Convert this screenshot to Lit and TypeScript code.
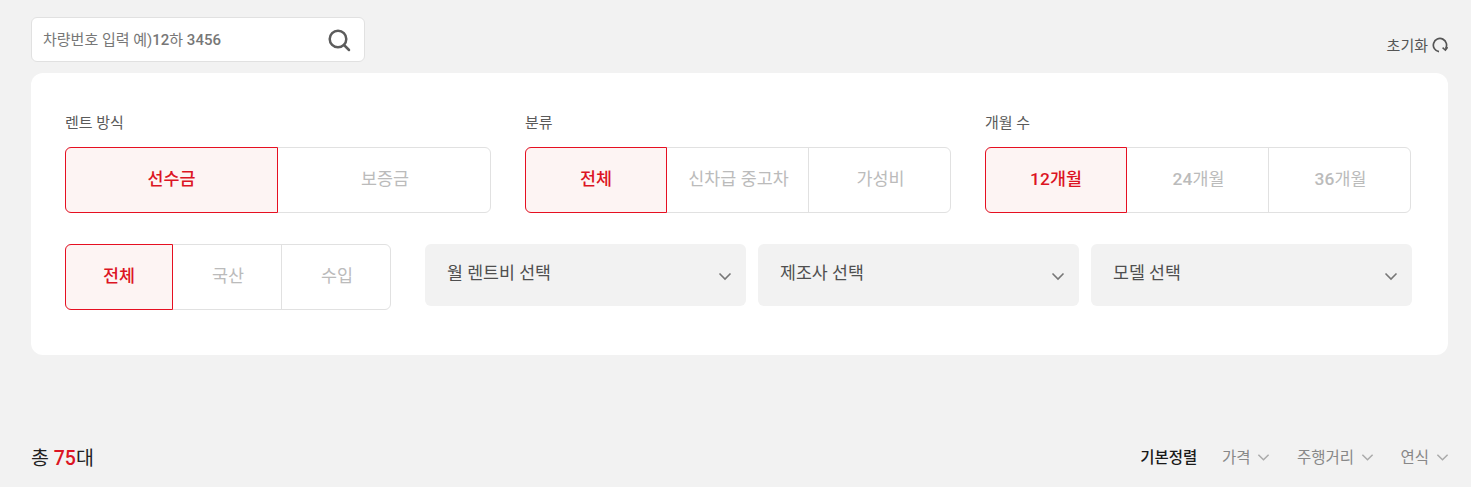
import { LitElement, html, css, svg } from "lit";
import { customElement } from "lit/decorators.js";

const chevron = html`<svg class="chev" viewBox="0 0 14 9" fill="none"><path d="M1.5 1.5 7 7l5.5-5.5" stroke="currentColor" stroke-width="1.6"/></svg>`;

type Seg = { label: string; options: string[] };

const segs: Seg[] = [
  { label: "렌트 방식", options: ["선수금", "보증금"] },
  { label: "분류", options: ["전체", "신차급 중고차", "가성비"] },
  { label: "개월 수", options: ["12개월", "24개월", "36개월"] },
];

// digits sit a weight above the hangul around them
const nums = (text: string) =>
  text
    .split(/(\d+)/)
    .map((part) => (/^\d+$/.test(part) ? html`<span class="num">${part}</span>` : part));

@customElement("app-root")
export class AppRoot extends LitElement {
  static styles = css`
    :host {
      display: block;
      height: 487px;
      overflow: hidden;
      background: #f2f2f2;
      font-family: Roboto, "Noto Sans CJK KR", sans-serif;
      color: #333;
    }
    .num {
      font-weight: 500;
    }
    .page {
      padding: 17px 23px 0 31px;
    }
    .top {
      display: flex;
      justify-content: space-between;
      align-items: flex-end;
      height: 45px;
      margin-bottom: 11px;
    }
    .search {
      box-sizing: border-box;
      width: 334px;
      height: 45px;
      display: flex;
      align-items: center;
      justify-content: space-between;
      padding: 0 13px 0 11px;
      background: #fff;
      border: 1px solid #e1e1e1;
      border-radius: 6px;
      font-size: 15px;
      color: #777;
    }
    .search .text {
      padding-bottom: 3px;
    }
    .search svg {
      width: 24px;
      height: 24px;
    }
    .reset {
      display: flex;
      align-items: center;
      gap: 4px;
      font-size: 15px;
      color: #555;
      height: 18px;
      margin: 0 0 9px;
    }
    .reset svg {
      width: 16px;
      height: 16px;
      margin-top: 2px;
    }
    .panel {
      box-sizing: border-box;
      height: 282px;
      padding: 39px 36px 0 34px;
      background: #fff;
      border-radius: 12px;
    }
    .row1 {
      display: grid;
      grid-template-columns: repeat(3, 426px);
      gap: 34px;
      margin-bottom: 31px;
    }
    .label {
      font-size: 15px;
      line-height: 22px;
      color: #5a5a5a;
      margin-bottom: 13px;
    }
    .group {
      display: flex;
      height: 66px;
      box-sizing: border-box;
      border: 1px solid #e1e1e1;
      border-radius: 6px;
    }
    .opt {
      flex: 1 1 0;
      display: flex;
      align-items: center;
      justify-content: center;
      box-sizing: border-box;
      padding: 0 0 6px 2px;
      font-size: 17.4px;
      color: #bbb;
      border-left: 1px solid #e1e1e1;
    }
    .opt:first-child {
      border-left: 0;
    }
    .opt.on {
      margin: -1px 0 -1px -1px;
      padding-left: 0;
      flex: 0 0 auto;
      border: 1px solid #e60f21;
      border-radius: 6px 0 0 6px;
      background: #fdf4f3;
      color: #dc1423;
      font-weight: 500;
    }
    .opt.on + .opt {
      border-left: 0;
    }
    .row2 {
      display: flex;
      align-items: flex-start;
    }
    .kind {
      width: 326px;
      margin-right: 34px;
    }
    .selects {
      display: grid;
      grid-template-columns: repeat(3, 321px);
      gap: 12px;
    }
    .select {
      height: 62px;
      display: flex;
      align-items: center;
      justify-content: space-between;
      box-sizing: border-box;
      padding: 0 14px 8px 22px;
      background: #f2f2f2;
      border-radius: 6px;
      font-size: 17.3px;
      color: #4f4f4f;
    }
    .select .chev {
      color: #777;
      margin-top: 10px;
    }
    .chev {
      width: 14px;
      height: 9px;
    }
    .bottom {
      display: flex;
      justify-content: space-between;
      align-items: center;
      margin: 86px -1px 0 0;
      height: 30px;
    }
    .total {
      font-size: 19.5px;
      color: #222;
    }
    .total b {
      font-weight: 500;
      color: #dc1423;
    }
    .sort {
      display: flex;
      align-items: center;
      gap: 26.5px;
      font-size: 15.5px;
      color: #888;
    }
    .sort .item {
      display: flex;
      align-items: center;
      gap: 7px;
    }
    .sort .item.on {
      margin-right: -2px;
      color: #1a1a1a;
      font-weight: 500;
    }
    .sort .chev {
      color: #aaa;
      width: 13px;
      margin-top: 2px;
    }
  `;

  renderGroup(options: string[], w: number) {
    return html`<div class="group">
      ${options.map(
        (o, i) => html`<div
          class="opt ${i === 0 ? "on" : ""}"
          style=${i === 0 ? `width:${w}px` : ""}
        >
          <span>${nums(o)}</span>
        </div>`,
      )}
    </div>`;
  }

  render() {
    return html`<div class="page">
      <div class="top">
        <div class="search">
          <span class="text">차량번호 입력 예)<span class="num">12</span>하 <span class="num">3456</span></span>
          <svg viewBox="0 0 24 24" fill="none" stroke="#5c5c5c" stroke-width="2.5">
            <circle cx="11" cy="11" r="8.3" />
            <path d="m17 17 5 5" stroke-linecap="round" />
          </svg>
        </div>
        <div class="reset">
          초기화
          <svg viewBox="0 0 16 16" fill="none" stroke="#555" stroke-width="1.7">
            ${svg`<path d="M7 14.6A6.6 6.6 0 1 1 13.4 11.8" />`}
            ${svg`<path d="M10.6 10.6 13.4 13.2 15.6 10.2" stroke-width="1.5" />`}
          </svg>
        </div>
      </div>
      <div class="panel">
        <div class="row1">
          ${segs.map(
            (s, i) => html`<div>
              <div class="label">${s.label}</div>
              ${this.renderGroup(s.options, i === 0 ? 213 : 142)}
            </div>`,
          )}
        </div>
        <div class="row2">
          <div class="kind">${this.renderGroup(["전체", "국산", "수입"], 108)}</div>
          <div class="selects">
            ${["월 렌트비 선택", "제조사 선택", "모델 선택"].map(
              (s) => html`<div class="select"><span>${s}</span>${chevron}</div>`,
            )}
          </div>
        </div>
      </div>
      <div class="bottom">
        <div class="total">총 <b>75</b>대</div>
        <div class="sort">
          <div class="item on">기본정렬</div>
          <div class="item">가격${chevron}</div>
          <div class="item">주행거리${chevron}</div>
          <div class="item">연식${chevron}</div>
        </div>
      </div>
    </div>`;
  }
}
